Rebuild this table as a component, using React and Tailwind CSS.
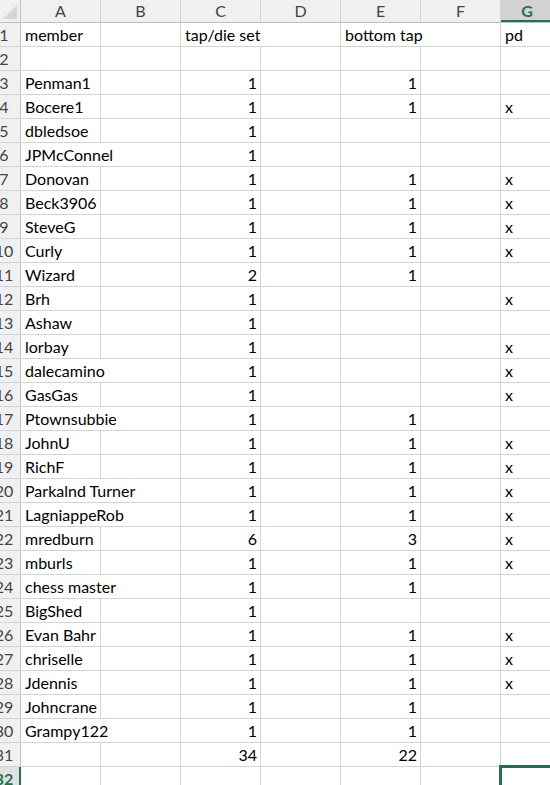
import React from "react";

const rows = [
  { a: "member", c: "tap/die set", ct: true, e: "bottom tap", et: true, g: "pd", hide: ["c", "e"] },
  {},
  { a: "Penman1", c: "1", e: "1" },
  { a: "Bocere1", c: "1", e: "1", g: "x" },
  { a: "dbledsoe", c: "1" },
  { a: "JPMcConnel", c: "1", hide: ["a"] },
  { a: "Donovan", c: "1", e: "1", g: "x" },
  { a: "Beck3906", c: "1", e: "1", g: "x" },
  { a: "SteveG", c: "1", e: "1", g: "x" },
  { a: "Curly", c: "1", e: "1", g: "x" },
  { a: "Wizard", c: "2", e: "1" },
  { a: "Brh", c: "1", g: "x" },
  { a: "Ashaw", c: "1" },
  { a: "lorbay", c: "1", g: "x" },
  { a: "dalecamino", c: "1", g: "x", hide: ["a"] },
  { a: "GasGas", c: "1", g: "x" },
  { a: "Ptownsubbie", c: "1", e: "1", hide: ["a"] },
  { a: "JohnU", c: "1", e: "1", g: "x" },
  { a: "RichF", c: "1", e: "1", g: "x" },
  { a: "Parkalnd Turner", c: "1", e: "1", g: "x", hide: ["a"] },
  { a: "LagniappeRob", c: "1", e: "1", g: "x", hide: ["a"] },
  { a: "mredburn", c: "6", e: "3", g: "x" },
  { a: "mburls", c: "1", e: "1", g: "x" },
  { a: "chess master", c: "1", e: "1", hide: ["a"] },
  { a: "BigShed", c: "1" },
  { a: "Evan Bahr", c: "1", e: "1", g: "x" },
  { a: "chriselle", c: "1", e: "1", g: "x" },
  { a: "Jdennis", c: "1", e: "1", g: "x" },
  { a: "Johncrane", c: "1", e: "1" },
  { a: "Grampy122", c: "1", e: "1", hide: ["a"] },
  { c: "34", e: "22" },
  {},
];

const letters = ["A", "B", "C", "D", "E", "F"];
const keys = ["a", "b", "c", "d", "e", "f"];

function Cell({ text, right, hide }) {
  return (
    <div
      className={
        "w-[80px] shrink-0 h-full border-r flex whitespace-nowrap px-[4px] leading-[23px] " +
        (hide ? "border-r-transparent " : "border-r-[#d4d4d4] ") +
        (right ? "justify-end pr-[3px]" : "justify-start")
      }
    >
      {text}
    </div>
  );
}

export default function App() {
  return (
    <div
      className="w-[550px] h-[785px] overflow-hidden bg-white text-black text-[16px]"
      style={{ fontFamily: "Lato, 'Open Sans', sans-serif" }}
    >
      {/* column header row */}
      <div className="flex h-[23px] border-b border-[#c0c0c0] bg-[#f0f0f0] text-[#444]">
        <div className="w-[21px] shrink-0 h-full border-r border-[#c0c0c0] relative">
          <svg width="20" height="22" className="absolute left-0 top-0">
            <polygon points="17,5 17,19 3,19" fill="#d6d6d6" />
          </svg>
        </div>
        {letters.map((l) => (
          <div
            key={l}
            className="w-[80px] shrink-0 h-full border-r border-[#d4d4d4] flex justify-center leading-[22px]"
          >
            {l}
          </div>
        ))}
        <div className="flex-1 h-full bg-[#d2d2d2] border-b-2 border-[#217346] flex justify-center pl-[3px] leading-[21px] font-bold text-[#217346]">
          G
        </div>
      </div>

      {rows.map((r, i) => {
        const n = i + 1;
        const sel = n === 32;
        const hide = r.hide || [];
        return (
          <div key={n} className="flex h-[24px] border-b border-[#d4d4d4]">
            <div
              className={
                "w-[21px] shrink-0 h-full overflow-hidden flex " +
                (sel
                  ? "bg-[#e1e1e1] border-r-2 border-r-[#217346] text-[#217346] font-bold"
                  : "bg-[#f0f0f0] border-r border-r-[#c0c0c0] text-[#444]")
              }
            >
              <div className="w-[8px] shrink-0 flex justify-center leading-[23px]">{n}</div>
            </div>
            {keys.map((k) => {
              const v = r[k];
              const isNum = v !== undefined && /^\d+$/.test(v);
              return <Cell key={k} text={v} right={isNum} hide={hide.includes(k)} />;
            })}
            <div className="flex-1 h-full relative px-[4px] leading-[23px]">
              {r.g}
              {sel && (
                <div className="absolute left-[-2px] top-[-2px] w-[60px] h-[30px] border-[3px] border-[#217346]" />
              )}
            </div>
          </div>
        );
      })}
    </div>
  );
}
